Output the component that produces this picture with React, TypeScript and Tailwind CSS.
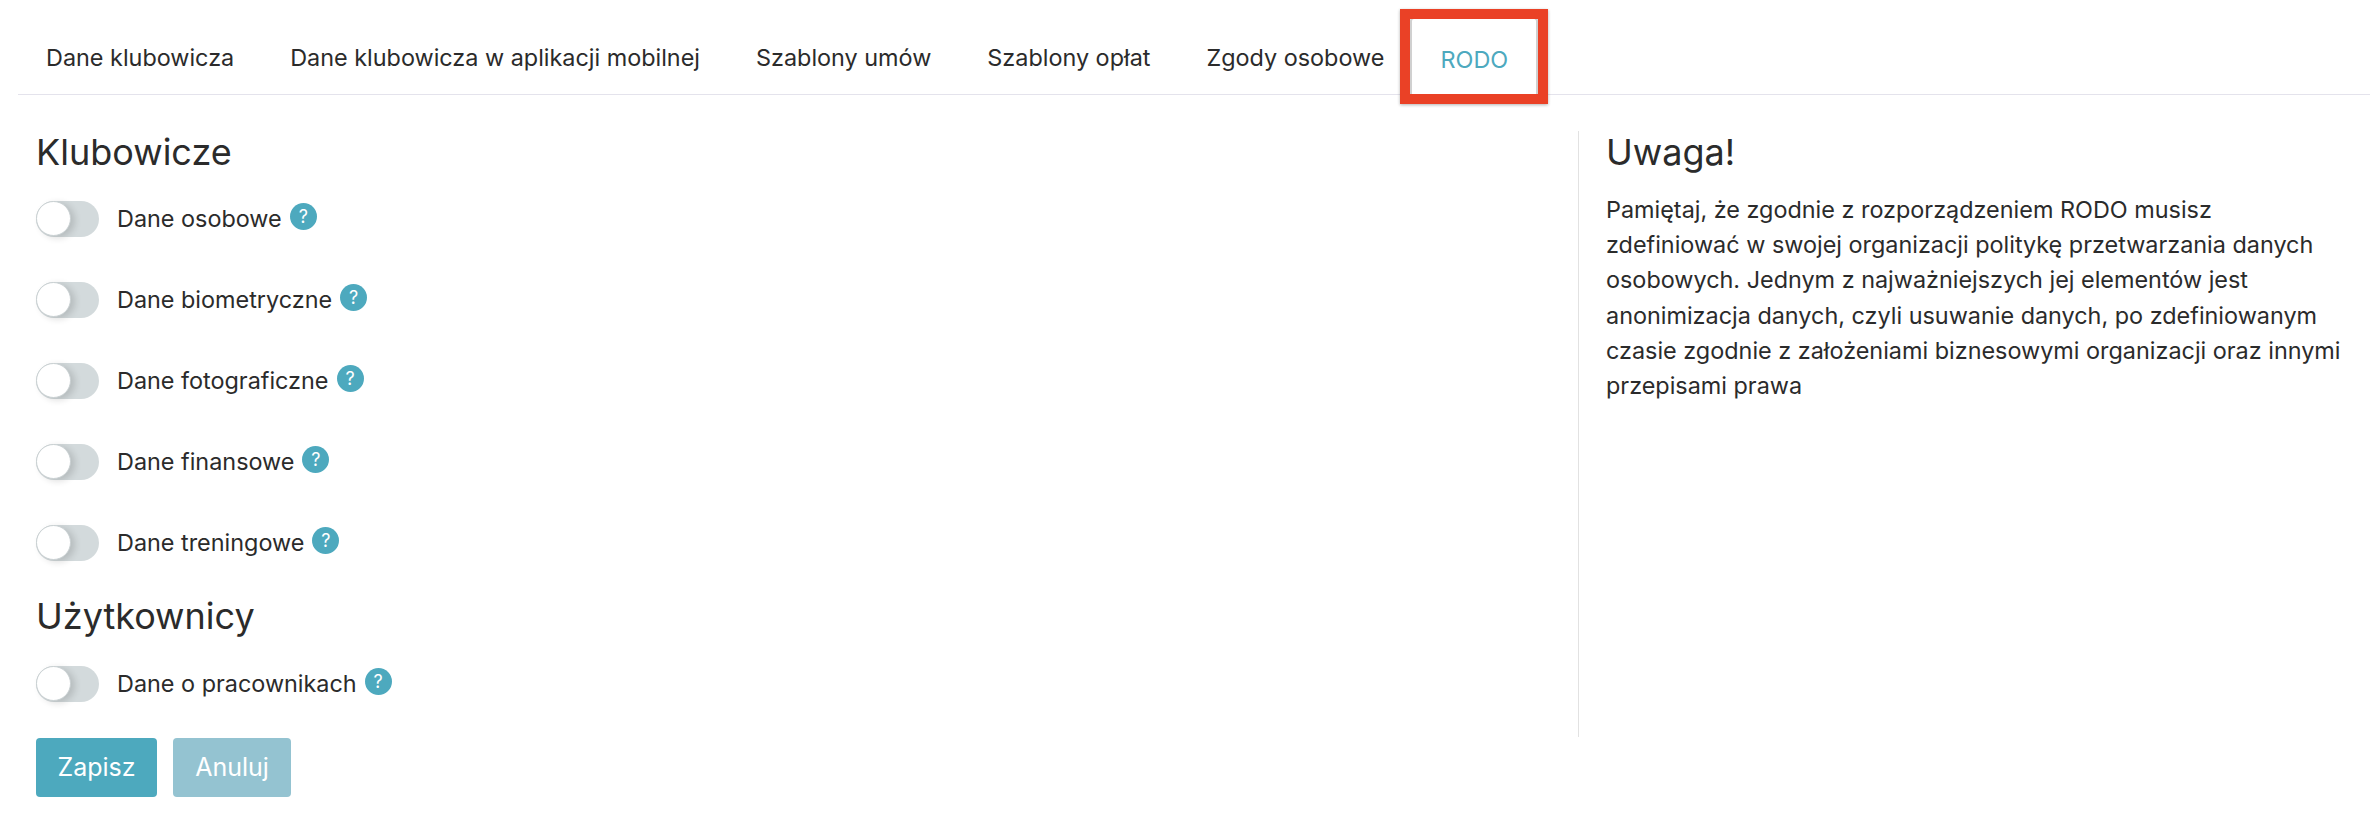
import React from "react";

const tabs = ["Dane klubowicza", "Dane klubowicza w aplikacji mobilnej", "Szablony umów", "Szablony opłat", "Zgody osobowe"];

function Toggle() {
  return (
    <span className="relative block w-[63px] h-[36px] rounded-full bg-[#d3dadc] shrink-0">
      <span className="absolute left-0 top-0 w-[35px] h-[35px] rounded-full bg-white border border-[#c9d0d2] shadow-[4px_2px_7px_rgba(0,0,0,0.14)]" />
    </span>
  );
}

function Row({ label, mb = "mb-[45px]" }: { label: string; mb?: string }) {
  return (
    <div className={`flex items-center h-[36px] ${mb}`}>
      <Toggle />
      <span className="ml-[18px] text-[23.4px] leading-[36px] text-[#2b2b2b]">{label}</span>
      <span className="ml-[8px] -mt-[5px] w-[27px] h-[27px] rounded-full bg-[#4da9be] text-white text-[18px] flex items-center justify-center">?</span>
    </div>
  );
}

export default function App() {
  return (
    <div className="w-[2370px] h-[832px] bg-white overflow-hidden font-['Inter',sans-serif] text-[#2b2b2b]">
      <div className="ml-[18px] h-[95px] border-b border-[#e4e3ec] flex items-end pl-[1px]">
        {tabs.map((t) => (
          <div key={t} className="h-[94px] pt-[40px] px-[27px] mr-[2px] text-[23.4px] leading-[36px] whitespace-nowrap">{t}</div>
        ))}
        <div className="relative h-[77px] w-[128px] -ml-[3px] pt-[23px] text-center border-2 border-b-0 border-[#d0d0d0] rounded-t-[4px] bg-white text-[23.4px] leading-[36px] text-[#4da9be]">
          RODO
          <div className="absolute -left-[12px] -top-[10px] w-[148px] h-[95px] border-[10px] border-[#ea4126] shadow-[0_1px_3px_rgba(0,0,0,0.3)]" />
        </div>
      </div>
      <div className="flex pt-[36px] pl-[36px]">
        <div className="w-[1543px] h-[606px] border-r border-[#e2e2e2]">
          <h2 className="text-[36px] leading-[42px] mb-[28px] text-[#2b2b2b]">Klubowicze</h2>
          <Row label="Dane osobowe" />
          <Row label="Dane biometryczne" />
          <Row label="Dane fotograficzne" />
          <Row label="Dane finansowe" />
          <Row label="Dane treningowe" mb="mb-[34px]" />
          <h2 className="text-[36px] leading-[42px] mb-[29px]">Użytkownicy</h2>
          <Row label="Dane o pracownikach" mb="mb-[36px]" />
          <div className="flex gap-[16px]">
            <button className="w-[121px] h-[59px] rounded-[4px] bg-[#4da9be] text-white text-[25px]">Zapisz</button>
            <button className="w-[118px] h-[59px] rounded-[4px] bg-[#94c3d1] text-white text-[25px]">Anuluj</button>
          </div>
        </div>
        <div className="pl-[27px] w-[770px]">
          <h2 className="text-[36px] leading-[42px] mb-[19px]">Uwaga!</h2>
          <p className="text-[23.4px] leading-[35.2px] w-[738px]">
            Pamiętaj, że zgodnie z rozporządzeniem RODO musisz zdefiniować w swojej organizacji politykę przetwarzania danych osobowych. Jednym z najważniejszych jej elementów jest anonimizacja danych, czyli usuwanie danych, po zdefiniowanym czasie zgodnie z założeniami biznesowymi organizacji oraz innymi przepisami prawa
          </p>
        </div>
      </div>
    </div>
  );
}
